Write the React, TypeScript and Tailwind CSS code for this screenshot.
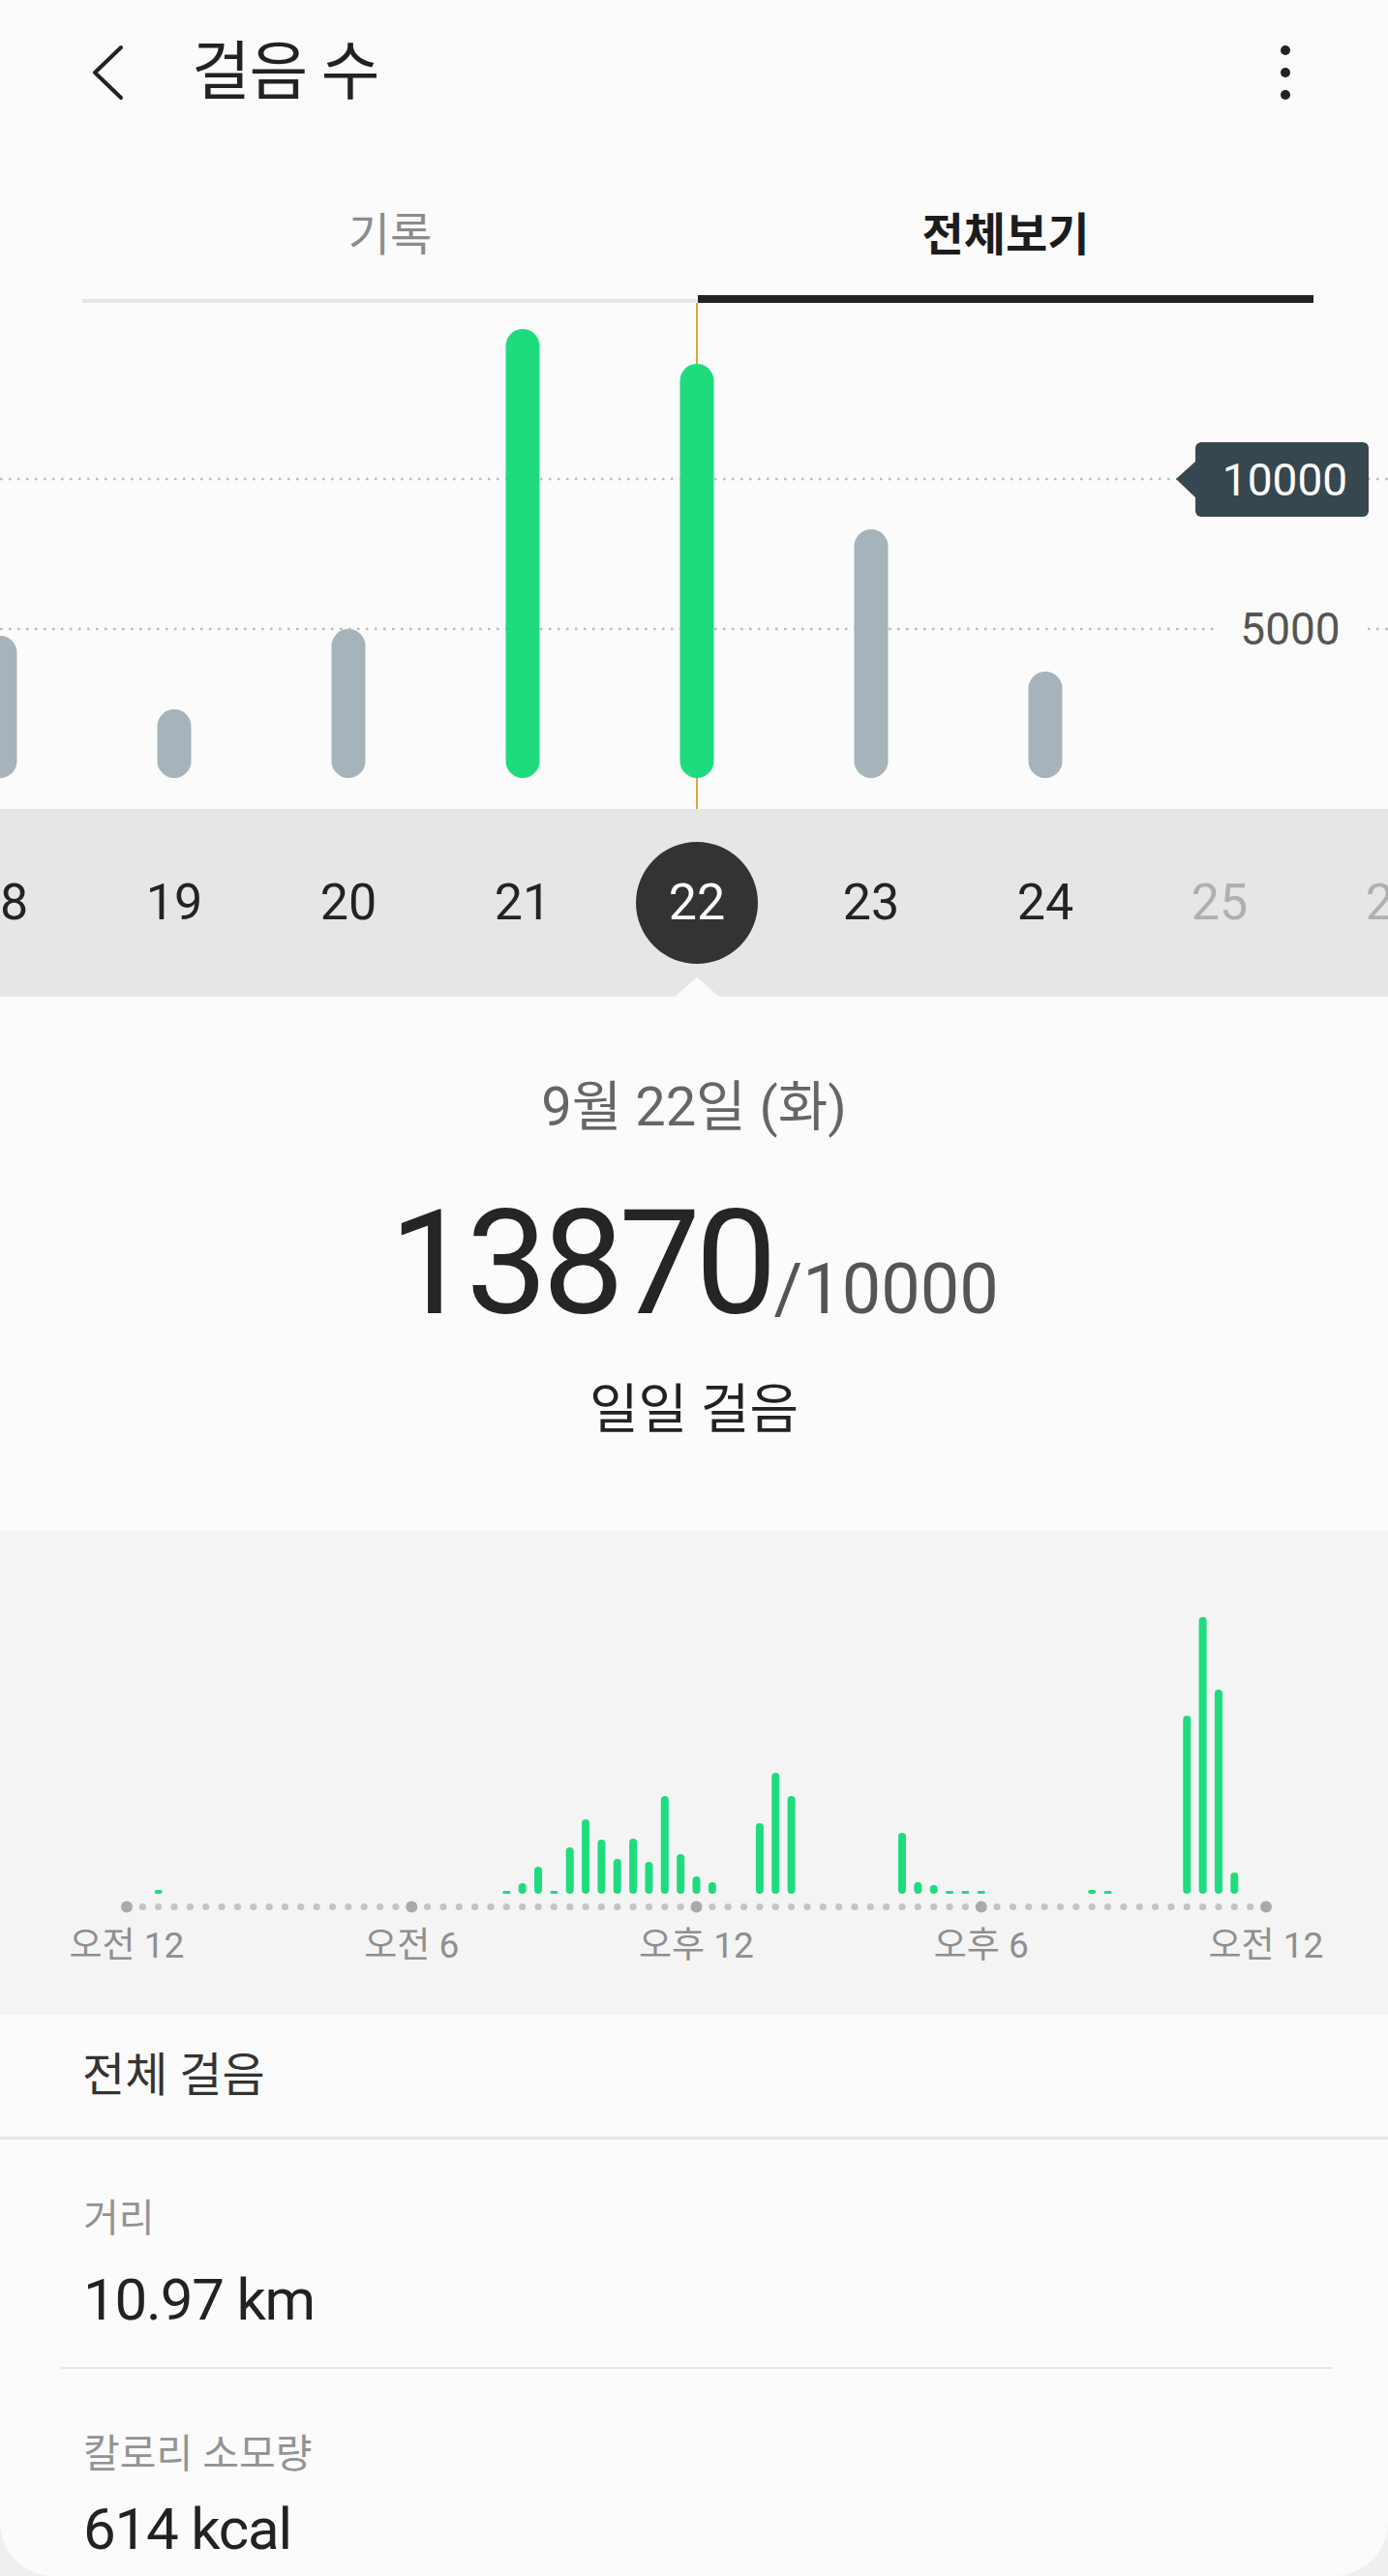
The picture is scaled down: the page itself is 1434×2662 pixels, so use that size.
import React from "react";

const dayBars = [
  { x: 0, top: 344, green: false },
  { x: 180, top: 420, green: false },
  { x: 360, top: 337, green: false },
  { x: 540, top: 27, green: true },
  { x: 720, top: 63, green: true },
  { x: 900, top: 234, green: false },
  { x: 1080, top: 381, green: false },
];

const days = [
  { d: "18", c: "text-[#232323]" },
  { d: "19", c: "text-[#232323]" },
  { d: "20", c: "text-[#232323]" },
  { d: "21", c: "text-[#232323]" },
  { d: "22", c: "sel" },
  { d: "23", c: "text-[#232323]" },
  { d: "24", c: "text-[#232323]" },
  { d: "25", c: "text-[#b0b0b0]" },
  { d: "26", c: "text-[#b0b0b0]" },
];

const hourly: [number, number][] = [
  [2, 4], [24, 3], [25, 11], [26, 28], [27, 2], [28, 48], [29, 77], [30, 56],
  [31, 36], [32, 57], [33, 33], [34, 101], [35, 41], [36, 18], [37, 12],
  [40, 73], [41, 125], [42, 101], [49, 63], [50, 12], [51, 9], [52, 3],
  [53, 3], [54, 3], [61, 4], [62, 2], [67, 184], [68, 286], [69, 211], [70, 22],
];

const AX0 = 131;
const STEP = 1177 / 72;

function TopChart() {
  return (
    <div className="relative h-[523px] bg-[#fbfbfb]">
      <svg width="1434" height="523" className="absolute inset-0">
        <line x1="0" y1="182" x2="1434" y2="182" stroke="#bcbcbc" strokeWidth="2.5" strokeDasharray="2.5 6.5" />
        <line x1="0" y1="337" x2="1254" y2="337" stroke="#bcbcbc" strokeWidth="2.5" strokeDasharray="2.5 6.5" />
        <line x1="1413" y1="337" x2="1434" y2="337" stroke="#bcbcbc" strokeWidth="2.5" strokeDasharray="2.5 6.5" />
        <line x1="720" y1="0" x2="720" y2="523" stroke="#e6a33a" strokeWidth="2" />
        {dayBars.map((b) => (
          <rect
            key={b.x}
            x={b.x - 17.5}
            y={b.top}
            width="35"
            height={491 - b.top}
            rx="17.5"
            fill={b.green ? "#1edc7d" : "#a6b3ba"}
          />
        ))}
        <polygon points="1236,163 1215,182 1236,202" fill="#37474f" />
      </svg>
      <div className="absolute left-[1235px] top-[144px] flex h-[77px] w-[179px] items-center justify-center rounded-[6px] bg-[#37474f] pl-[6px] text-[46px] leading-none text-white">
        10000
      </div>
      <div className="absolute left-[1272px] top-[313px] w-[122px] text-center text-[46px] leading-[48px] text-[#555555]">
        5000
      </div>
    </div>
  );
}

function DateStrip() {
  return (
    <div className="relative h-[194px] overflow-hidden bg-[#e6e6e6]">
      <div className="-ml-[90px] flex h-full items-center">
        {days.map((d) => (
          <div key={d.d} className="flex w-[180px] shrink-0 items-center justify-center">
            {d.c === "sel" ? (
              <div className="flex h-[126px] w-[126px] items-center justify-center rounded-full bg-[#333333] text-[52px] leading-none text-white">
                {d.d}
              </div>
            ) : (
              <span className={`text-[52px] leading-none ${d.c}`}>{d.d}</span>
            )}
          </div>
        ))}
      </div>
      <svg width="46" height="20" className="absolute bottom-0 left-[697px]">
        <polygon points="0,20 23,0 46,20" fill="#fbfbfb" />
      </svg>
    </div>
  );
}

function Summary() {
  return (
    <div className="flex h-[552px] flex-col items-center bg-[#fbfbfb] pt-[84px]">
      <div className="text-[56px] leading-[60px] text-[#666666]">9월 22일 (화)</div>
      <div className="mt-[57px] flex items-baseline justify-center">
        <span className="text-[150px] leading-none tracking-[-0.035em] text-[#252525]">13870</span>
        <span className="ml-[2px] text-[72px] leading-none text-[#555555]">/10000</span>
      </div>
      <div className="mt-[45px] text-[55px] leading-[60px] text-[#222222]">일일 걸음</div>
    </div>
  );
}

function HourlyChart() {
  const dots = Array.from({ length: 73 }, (_, i) => i);
  return (
    <div className="relative h-[500px] bg-[#f4f4f4]">
      <svg width="1434" height="500" className="absolute inset-0">
        {hourly.map(([i, h]) => {
          const cx = AX0 + i * STEP;
          const hh = Math.max(h, 3);
          return (
            <rect
              key={i}
              x={cx - 4}
              y={375 - hh}
              width="8"
              height={hh}
              rx={Math.min(4, hh / 2)}
              fill="#1edc7d"
            />
          );
        })}
        {dots.map((i) => {
          const major = i % 18 === 0;
          return (
            <circle
              key={i}
              cx={AX0 + i * STEP}
              cy={388.5}
              r={major ? 6 : 3.6}
              fill={major ? "#a9a9a9" : "#c4c4c4"}
            />
          );
        })}
      </svg>
      <div className="absolute left-[71px] top-[407px] flex w-[1297px] justify-between text-[37px] leading-[44px] text-[#8f8f8f]">
        {["오전 12", "오전 6", "오후 12", "오후 6", "오전 12"].map((t, k) => (
          <div key={k} className="w-[120px] whitespace-nowrap text-center">
            {t}
          </div>
        ))}
      </div>
    </div>
  );
}

function Stats() {
  return (
    <div className="h-[580px] overflow-hidden rounded-b-[56px] bg-[#fbfbfb]">
      <div className="flex h-[126px] items-center pl-[85px] text-[48px] text-[#333333]">전체 걸음</div>
      <div className="h-[3px] bg-[#e6e6e6]" />
      <div className="pl-[86px] pt-[58px]">
        <div className="text-[40px] leading-[48px] text-[#939393]">거리</div>
        <div className="mt-[24px] text-[60px] leading-[72px] tracking-[-0.02em] text-[#222222]">10.97 km</div>
      </div>
      <div className="ml-[63px] mr-[57px] mt-[33px] h-[2px] bg-[#e6e6e6]" />
      <div className="pl-[86px] pt-[64px]">
        <div className="text-[41px] leading-[48px] text-[#939393]">칼로리 소모량</div>
        <div className="mt-[18px] text-[60px] leading-[72px] tracking-[-0.02em] text-[#222222]">614 kcal</div>
      </div>
    </div>
  );
}

export default function App() {
  return (
    <div className="h-[2662px] w-[1434px] overflow-hidden bg-[#efefef] font-[Roboto,'Noto_Sans_CJK_KR',sans-serif]">
      {/* Header */}
      <div className="flex h-[150px] items-center bg-[#fbfbfb] pl-[92px] pr-[101px]">
        <svg width="38" height="58" viewBox="0 0 38 58">
          <polyline points="33,3 6,29 33,55" fill="none" stroke="#222222" strokeWidth="4" strokeLinecap="round" strokeLinejoin="round" />
        </svg>
        <div className="ml-[68px] text-[66px] leading-none tracking-[-0.02em] text-[#222222]">걸음 수</div>
        <div className="ml-auto flex flex-col items-center gap-[13px]">
          <div className="h-[10px] w-[10px] rounded-full bg-[#222222]" />
          <div className="h-[10px] w-[10px] rounded-full bg-[#222222]" />
          <div className="h-[10px] w-[10px] rounded-full bg-[#222222]" />
        </div>
      </div>
      {/* Tabs */}
      <div className="flex h-[163px] bg-[#fbfbfb] pl-[85px] pr-[77px]">
        <div className="flex flex-1 flex-col">
          <div className="pt-[63px] text-center text-[47px] leading-[60px] text-[#8c8c8c]">기록</div>
          <div className="mt-auto flex h-[8px] items-end">
            <div className="h-[4px] w-full bg-[#e6e6e6]" />
          </div>
        </div>
        <div className="flex flex-1 flex-col">
          <div className="pt-[63px] text-center text-[47px] font-bold leading-[60px] text-[#1c1c1c]">전체보기</div>
          <div className="mt-auto h-[8px] bg-[#222222]" />
        </div>
      </div>
      <TopChart />
      <DateStrip />
      <Summary />
      <HourlyChart />
      <Stats />
    </div>
  );
}
